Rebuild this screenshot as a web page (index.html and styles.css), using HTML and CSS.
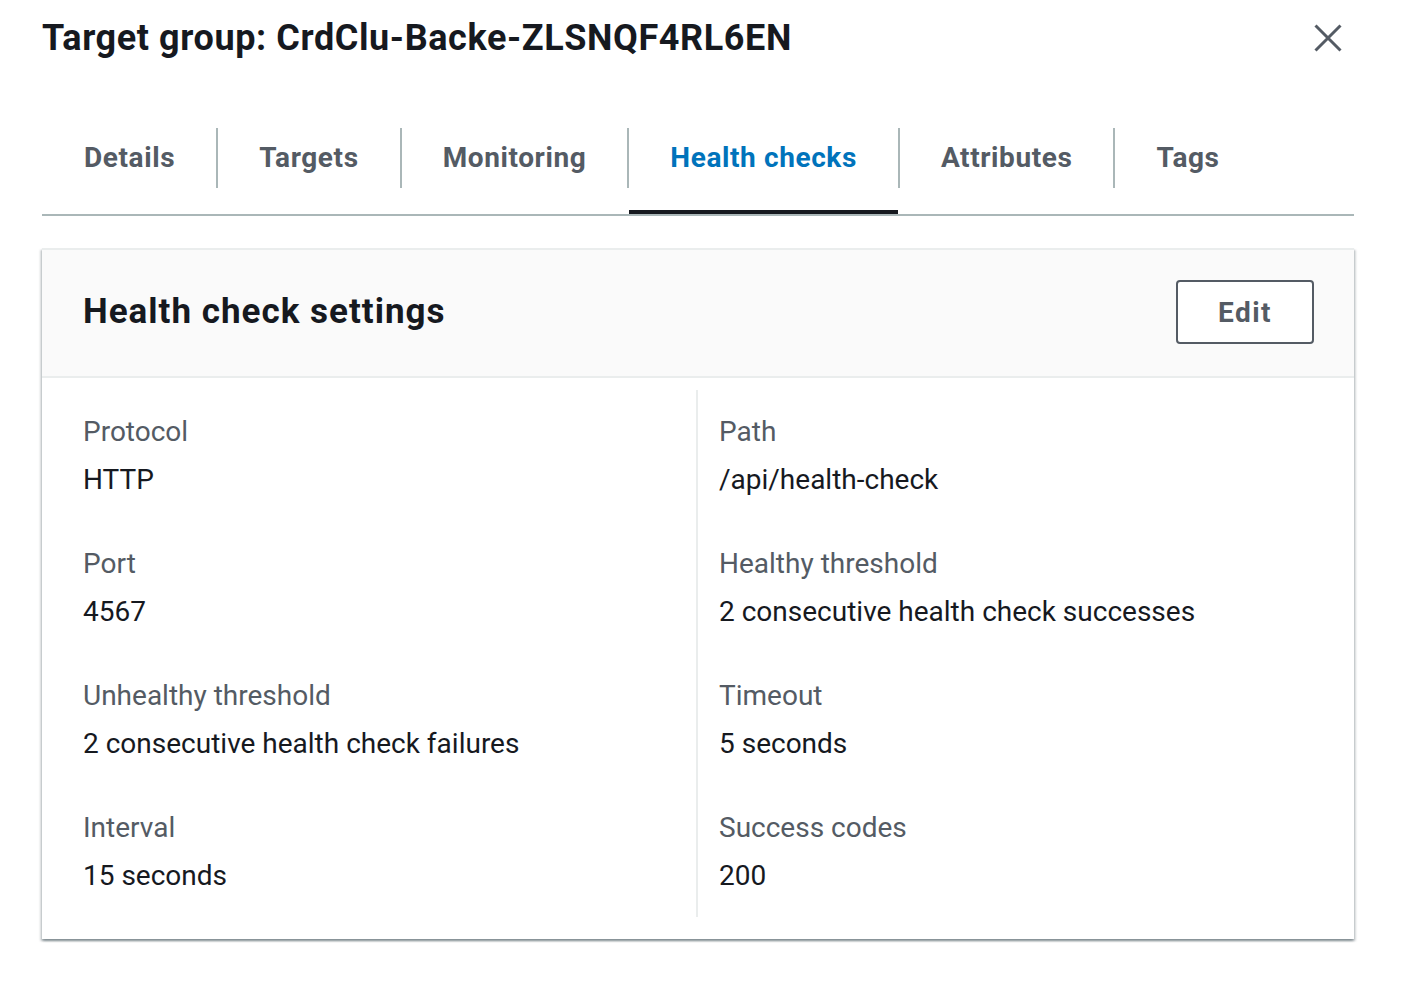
FILE: index.html
```html
<!DOCTYPE html>
<html lang="en">
<head>
<meta charset="utf-8">
<title>Target group: CrdClu-Backe-ZLSNQF4RL6EN</title>
<link rel="stylesheet" href="styles.css">
</head>
<body>
<div class="page">
  <header class="top">
    <h1 class="title">Target group: CrdClu-Backe-ZLSNQF4RL6EN</h1>
    <button class="close" aria-label="Close">
      <svg width="28" height="28" viewBox="0 0 28 28"><path d="M1.5 1.5 L26.5 26.5 M26.5 1.5 L1.5 26.5" stroke="#545b64" stroke-width="3" fill="none"/></svg>
    </button>
  </header>

  <nav class="tabs">
    <a class="tab"><span class="tab-label">Details</span><span class="tab-bar"></span></a>
    <span class="sep"></span>
    <a class="tab"><span class="tab-label">Targets</span><span class="tab-bar"></span></a>
    <span class="sep"></span>
    <a class="tab"><span class="tab-label">Monitoring</span><span class="tab-bar"></span></a>
    <span class="sep"></span>
    <a class="tab active"><span class="tab-label">Health checks</span><span class="tab-bar"></span></a>
    <span class="sep"></span>
    <a class="tab"><span class="tab-label">Attributes</span><span class="tab-bar"></span></a>
    <span class="sep"></span>
    <a class="tab"><span class="tab-label">Tags</span><span class="tab-bar"></span></a>
  </nav>

  <section class="card">
    <div class="card-header">
      <h2 class="card-title">Health check settings</h2>
      <button class="btn">Edit</button>
    </div>
    <div class="card-body">
      <div class="col">
        <div class="kv"><div class="k">Protocol</div><div class="v">HTTP</div></div>
        <div class="kv"><div class="k">Port</div><div class="v">4567</div></div>
        <div class="kv"><div class="k">Unhealthy threshold</div><div class="v">2 consecutive health check failures</div></div>
        <div class="kv"><div class="k">Interval</div><div class="v">15 seconds</div></div>
      </div>
      <div class="col col-right">
        <div class="kv"><div class="k">Path</div><div class="v">/api/health-check</div></div>
        <div class="kv"><div class="k">Healthy threshold</div><div class="v">2 consecutive health check successes</div></div>
        <div class="kv"><div class="k">Timeout</div><div class="v">5 seconds</div></div>
        <div class="kv"><div class="k">Success codes</div><div class="v">200</div></div>
      </div>
    </div>
  </section>
</div>
</body>
</html>
```

FILE: styles.css
```css
* { box-sizing: border-box; }
html, body { margin: 0; padding: 0; background: #ffffff; }
body {
  font-family: Roboto, "Liberation Sans", sans-serif;
  color: #16191f;
}
.page {
  width: 1312px;
  margin-left: 42px;
  padding-top: 16px;
  padding-bottom: 60px;
}
.top {
  display: flex;
  align-items: center;
  justify-content: space-between;
  height: 44px;
}
.title {
  margin: 0;
  font-size: 36px;
  line-height: 44px;
  font-weight: 700;
  letter-spacing: 0.6px;
  color: #16191f;
}
.close {
  border: 0;
  background: none;
  padding: 0;
  width: 28px;
  height: 28px;
  margin-right: 12px;
  display: flex;
}
.tabs {
  display: flex;
  margin-top: 68px;
  border-bottom: 2px solid #aab7b8;
}
.tab {
  display: flex;
  flex-direction: column;
  color: #545b64;
  font-size: 28px;
  font-weight: 700;
  letter-spacing: 0.6px;
}
.tab-label {
  height: 60px;
  line-height: 60px;
  padding: 0 41px 0 42px;
  white-space: nowrap;
}
.tab + .sep + .tab .tab-label {
  padding-left: 41px;
}
.tab-bar {
  height: 4px;
  margin-top: 22px;
}
.tab.active { color: #0073bb; }
.tab.active .tab-bar { background: #16191f; }
.sep {
  width: 2px;
  height: 60px;
  background: #aab7b8;
}
.card {
  margin-top: 32px;
  border-top: 2px solid #eaeded;
  background: #fff;
  box-shadow: 0 2px 2px 0 rgba(0, 28, 36, 0.3), 2px 2px 2px 0 rgba(0, 28, 36, 0.15), -2px 2px 2px 0 rgba(0, 28, 36, 0.15);
}
.card-header {
  display: flex;
  align-items: center;
  justify-content: space-between;
  background: #fafafa;
  border-bottom: 2px solid #eaeded;
  padding: 30px 40px 32px 41px;
}
.card-title {
  margin: 0;
  font-size: 35px;
  line-height: 40px;
  font-weight: 700;
  letter-spacing: 1px;
  color: #16191f;
}
.btn {
  font-family: inherit;
  width: 138px;
  height: 64px;
  border: 2px solid #545b64;
  border-radius: 4px;
  background: #fff;
  color: #545b64;
  font-size: 28px;
  font-weight: 700;
  letter-spacing: 1.5px;
  padding: 0;
}
.card-body {
  display: grid;
  grid-template-columns: 1fr 1fr;
  padding: 12px 24px 22px 20px;
}
.col {
  display: flex;
  flex-direction: column;
  gap: 44px;
  padding: 22px 20px 21px 21px;
}
.col-right {
  border-left: 2px solid #eaeded;
}
.kv {
  display: flex;
  flex-direction: column;
  gap: 8px;
}
.k, .v {
  font-size: 28px;
  line-height: 40px;
}
.k { color: #545b64; }
.v { color: #16191f; }
```
